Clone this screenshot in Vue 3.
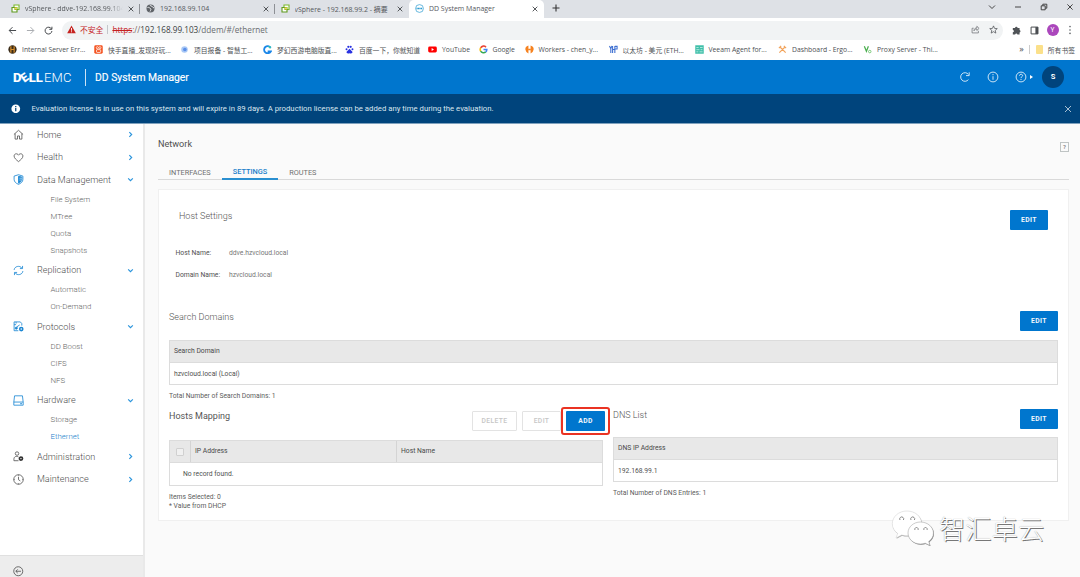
<template>
  <div class="screen">
    <!-- 浏览器标签栏 -->
    <div class="tab-strip">
      <div v-for="tab in tabs" :key="tab.title" class="tab" :class="{ active: tab.active, divided: tab.divided }">
        <svg v-if="tab.icon === 'vsphere'" class="tab-icon" viewBox="0 0 18 18">
          <path d="M6 2h10v9h-4V7H6z" fill="#fff" stroke="#7ab829" stroke-width="2.2" />
          <path d="M2 7h6v4h4v5H2z" fill="#fff" stroke="#5d9a1c" stroke-width="2.2" />
          <path d="M7 7h5v4H7z" fill="#f2d64b" />
        </svg>
        <svg v-else-if="tab.icon === 'globe'" class="tab-icon" viewBox="0 0 18 18">
          <circle cx="9" cy="9" r="8" fill="#5f6368" />
          <path d="M3 7c3-1 4 1 6 2s0 4-1 6M8 2c1 3 4 1 5 4l3 2" fill="none" stroke="#e8eaed" stroke-width="2" />
        </svg>
        <svg v-else class="tab-icon" viewBox="0 0 18 18">
          <circle cx="9" cy="9" r="7.8" fill="#fff" stroke="#2a9bd0" stroke-width="1.4" />
          <path d="M3 9h12" stroke="#2a9bd0" stroke-width="3.4" stroke-dasharray="2.4 .6" />
        </svg>
        <span class="tab-title">{{ tab.title }}</span>
        <svg class="tab-close" viewBox="0 0 6 6"><path d="M.7.7l4.6 4.6M5.3.7L.7 5.3" /></svg>
      </div>
      <svg class="new-tab" viewBox="0 0 8 8"><path d="M4 .5v7M.5 4h7" /></svg>
      <div class="window-controls">
        <svg viewBox="0 0 8 8"><path d="M1 2.5l3 3 3-3" /></svg>
        <svg viewBox="0 0 8 8"><path d="M1 4h6" /></svg>
        <svg viewBox="0 0 8 8"><path d="M1.2 2.8h4v4h-4zM2.8 2.6V1.2h4v4H5.4" /></svg>
        <svg viewBox="0 0 8 8"><path d="M1.4 1.4l5.2 5.2M6.6 1.4L1.4 6.6" /></svg>
      </div>
    </div>

    <!-- 地址栏 -->
    <div class="toolbar">
      <svg class="nav-icon" viewBox="0 0 10 10"><path d="M9 5H1.4M5 1.3L1.3 5 5 8.7" /></svg>
      <svg class="nav-icon dim" viewBox="0 0 10 10"><path d="M1 5h7.6M5 1.3L8.7 5 5 8.7" /></svg>
      <svg class="nav-icon" viewBox="0 0 10 10"><path d="M8.3 3.2A3.8 3.8 0 1 0 8.8 5.6M8.8.8v2.9H5.9" /></svg>
      <div class="address">
        <svg class="warn" viewBox="0 0 9 9"><path d="M4.5.6L8.8 8.2H.2z" fill="#c5221f" /><path d="M4.5 3v2.7M4.5 6.3v1" stroke="#fff" stroke-width=".9" /></svg>
        <span class="unsafe">不安全</span>
        <span class="bar"></span>
        <span class="url"><s>https</s><i>://</i><b>192.168.99.103</b>/ddem/#/ethernet</span>
        <svg class="addr-icon" viewBox="0 0 10 10"><path d="M3 3.6H1.2v5.2h7V6.5M3.3 6.4C3.4 4.3 4.7 3.2 6.5 3.2V1.4L9 3.8 6.5 6.1V4.4C5 4.3 4 5 3.3 6.4z" /></svg>
        <svg class="addr-icon star" viewBox="0 0 10 10"><path d="M5 1l1.2 2.8 3 .2L6.9 6l.7 3L5 7.4 2.4 9l.7-3L.8 4l3-.2z" /></svg>
      </div>
      <svg class="ext" viewBox="0 0 10 10"><path d="M3.4 2.2a1.4 1.4 0 0 1 2.8 0h2.2v2.2a1.4 1.4 0 0 1 0 2.7v2.3H6a1.3 1.3 0 0 0-2.5 0H.9V6.9a1.2 1.2 0 0 0 0-2.4V2.2z" fill="#4f5357" /></svg>
      <svg class="ext" viewBox="0 0 10 10"><path d="M1.2 1.200h7.600v7.600H1.200z" fill="none" stroke="#4a4d51" stroke-width="1.1" /><path d="M6 1.200h3v7.600H6z" fill="#4a4d51" /></svg>
      <span class="profile">Y</span>
      <svg class="dots" viewBox="0 0 4 10"><circle cx="2" cy="1.6" r=".8" /><circle cx="2" cy="5" r=".8" /><circle cx="2" cy="8.4" r=".8" /></svg>
    </div>

    <!-- 书签栏 -->
    <div class="bookmarks">
      <div v-for="b in bookmarks" :key="b.text" class="bookmark" :style="{ width: b.width + 'px' }">
        <svg viewBox="0 0 10 10">
          <template v-if="b.icon === 'globe'">
            <circle cx="5" cy="5" r="4.6" fill="#3a2b18" />
            <path d="M3.2 1.5v7M6.8 1.5v7M3.2 5h3.6" stroke="#d9902c" stroke-width="1.3" />
          </template>
          <template v-else-if="b.icon === 'kuai'">
            <rect x=".3" y=".3" width="9.4" height="9.4" rx="1.6" fill="#f4511e" />
            <circle cx="3.7" cy="3" r="1.2" fill="none" stroke="#fff" stroke-width=".8" />
            <circle cx="6.6" cy="3" r="1.2" fill="none" stroke="#fff" stroke-width=".8" />
            <rect x="2.8" y="5.2" width="4.6" height="3" rx=".7" fill="none" stroke="#fff" stroke-width=".9" />
          </template>
          <template v-else-if="b.icon === 'dot'">
            <circle cx="5" cy="5" r="3.6" fill="#a9c8f5" />
            <circle cx="5.4" cy="5" r="2" fill="#5b8fe8" />
          </template>
          <template v-else-if="b.icon === 'swirl'">
            <path d="M8.6 3A4 4 0 1 0 8.8 7H5.2" fill="none" stroke="#1a86e8" stroke-width="2" />
            <path d="M5 1.2L9 1.8 8 4.4z" fill="#31c6b4" />
          </template>
          <template v-else-if="b.icon === 'paw'">
            <circle cx="1.7" cy="4.6" r="1.1" /><circle cx="3.7" cy="2" r="1.2" />
            <circle cx="6.3" cy="2" r="1.2" /><circle cx="8.3" cy="4.6" r="1.1" />
            <path d="M5 4.2L8.2 7.6c.5 2-1.6 2-3.2 1.6-1.6.4-3.7.4-3.2-1.6z" />
          </template>
          <template v-else-if="b.icon === 'youtube'">
            <rect x=".2" y="1.6" width="9.6" height="6.8" rx="1.6" fill="#f00" />
            <path d="M4 3.4L6.7 5 4 6.6z" fill="#fff" />
          </template>
          <template v-else-if="b.icon === 'google'">
            <g fill="none" stroke-width="1.7">
              <path d="M7.8 2.4A3.7 3.7 0 0 0 1.8 3.2" stroke="#ea4335" />
              <path d="M1.8 3.2a3.7 3.7 0 0 0 0 3.6" stroke="#fbbc05" />
              <path d="M1.8 6.8a3.7 3.7 0 0 0 5.7.9" stroke="#34a853" />
              <path d="M7.5 7.7A3.7 3.7 0 0 0 8.7 5H5" stroke="#4285f4" />
            </g>
          </template>
          <template v-else-if="b.icon === 'workers'">
            <path d="M3.8.6Q0 2 .4 5t3.4 4.4z" fill="#f6821f" />
            <path d="M6.2.6Q10 2 9.6 5t-3.4 4.4z" fill="#f6821f" />
            <path d="M3.5 4.2h3v1.6h-3z" fill="#f6821f" />
          </template>
          <template v-else-if="b.icon === 'yep'">
            <path d="M.5 1l1.5 3 1.3-3M2 4v5M4 1v8M4 5h2M6.5 1v8M6.5 1.5h2.5v3H6.5" fill="none" stroke="#3d6fd1" stroke-width="1.2" />
          </template>
          <template v-else-if="b.icon === 'veeam'">
            <rect x=".3" y=".3" width="9.4" height="9.4" fill="#3fbfa9" />
            <path d="M1.5 2.8h2.5M5.5 2.8h3M1.5 5.2h3.5M6.2 5.2h2M1.5 7.6h2.2M5 7.6h3.5" stroke="#b9ebe2" stroke-width="1" />
          </template>
          <template v-else-if="b.icon === 'tools'">
            <path d="M1.5 8.5L7.8 2.2M8.5 8.5L2.2 2.2M1 3.5L3.5 1M6.5 1L9 3.5" fill="none" stroke="#f2a45c" stroke-width="1.3" />
          </template>
          <template v-else>
            <path d="M1.5 1.5l2.3 5.5L6 1.5" fill="none" stroke="#4caf50" stroke-width="1.4" />
            <circle cx="7.5" cy="7.3" r="1.4" fill="none" stroke="#6fc46f" stroke-width="1" />
          </template>
        </svg>
        <span>{{ b.text }}</span>
      </div>
      <div class="bookmarks-end">
        <span class="more">»</span>
        <span class="sep"></span>
        <span class="folder"></span>
        <span class="all">所有书签</span>
      </div>
    </div>

    <!-- 应用头部 -->
    <header class="app-header">
      <div class="logo"><b>D<em>E</em>LL</b><span>EMC</span></div>
      <h1>DD System Manager</h1>
      <div class="header-actions">
        <svg class="refresh" viewBox="0 0 12 12"><path d="M9.4 3.4A4.300 4.300 0 1 0 9.400 8.600M10.200 1.300v3.300H7" /></svg>
        <svg class="info" viewBox="0 0 12 12"><circle cx="6" cy="6" r="4.9" /><path d="M6 5.2v3.6M6 3v1.2" /></svg>
        <svg class="help" viewBox="0 0 12 12"><circle cx="6" cy="6" r="4.9" /><path d="M4.5 4.7c0-2 3.1-1.9 3.1-.1C7.6 5.7 6 5.7 6 7.1M6 8v1" /></svg>
        <span class="caret"></span>
        <span class="avatar">S</span>
      </div>
    </header>

    <div class="banner">
      <svg class="banner-icon" viewBox="0 0 10 10"><circle cx="5" cy="5" r="4.6" fill="#fff" /><path d="M5 4.3v3.4M5 2.2v1.3" stroke="#00447c" stroke-width="1.3" /></svg>
      <span>Evaluation license is in use on this system and will expire in 89 days. A production license can be added any time during the evaluation.</span>
      <svg class="banner-close" viewBox="0 0 8 8"><path d="M1 1l6 6M7 1L1 7" /></svg>
    </div>

    <div class="body">
      <!-- 侧边菜单 -->
      <aside class="sidebar">
        <nav>
          <div v-for="item in menu" :key="item.name">
            <div class="menu-item">
              <svg class="menu-icon" :class="{ blue: item.children }" viewBox="0 0 12 12">
                <path v-if="item.name === 'Home'" d="M1 6l5-4.6L11 6M2.3 5v6h2.6V7.6h2.2V11h2.6V5" />
                <path v-else-if="item.name === 'Health'" d="M6 10.5C3.5 8.5 1.2 6.6 1.2 4.4c0-2.7 3.5-3.4 4.8-.9 1.3-2.5 4.8-1.8 4.8.9 0 2.2-2.3 4.1-4.8 6.1z" />
                <template v-else-if="item.name === 'Data Management'">
                  <path d="M6 .8l4.8 1.5v3.5c0 2.6-2 4.4-4.8 5.5-2.8-1.1-4.8-2.900-4.8-5.500V2.300z" />
                  <path d="M6 2.5v7.5c2.2-1 3.6-2.4 3.6-4.5V3.3z" fill="#1b87d3" />
                  <path d="M7 4.6h2.8M7 6.6h2.6" stroke="#fff" stroke-width=".6" />
                </template>
                <path v-else-if="item.name === 'Replication'" d="M1.2 5.4C1.6 1.4 7.3 0 9.7 3.4M10.4 1v2.9H7.5M10.8 6.6c-.4 4-6.1 5.4-8.5 2M1.6 11V8.1h2.9" />
                <template v-else-if="item.name === 'Protocols'">
                  <path d="M9.6 5V2.8L8 1H1.2v9.6h4.6M1.2 4h2.2M3.4 1v1.8M4.3 8.8V6.3l3-2" />
                  <circle cx="3.5" cy="7.8" r="1.1" fill="#1b87d3" />
                  <circle cx="9" cy="8.8" r="1.7" stroke-width="1.7" />
                </template>
                <template v-else-if="item.name === 'Hardware'">
                  <path d="M.9 7.7L1.7.9h8.6l.8 6.8v3.4H.9zM.9 7.7h10.2" />
                  <path d="M7.8 9.5h2" stroke-width="1.2" />
                </template>
                <template v-else-if="item.name === 'Administration'">
                  <circle cx="4.4" cy="2.8" r="1.9" />
                  <path d="M6 10.6H1V9c0-3.3 3-3.7 5-2.5" />
                  <circle cx="8.7" cy="8.3" r="1.7" stroke="#333" stroke-width="1.8" />
                </template>
                <template v-else>
                  <circle cx="6" cy="6" r="5.2" />
                  <path d="M6 3v3.2l2 1.4M6 .8v1M6 10.2v1M.8 6h1M10.2 6h1" />
                </template>
              </svg>
              <span>{{ item.name }}</span>
              <svg class="chevron" viewBox="0 0 6 6"><path :d="item.children ? 'M1 2l2 2 2-2' : 'M2 1l2 2-2 2'" /></svg>
            </div>
            <div v-for="child in item.children" :key="child" class="menu-child" :class="{ current: child === 'Ethernet' }">{{ child }}</div>
          </div>
        </nav>
        <div class="sidebar-foot">
          <svg viewBox="0 0 10 10"><circle cx="5" cy="5" r="4.3" /><path d="M7.6 5H2.7M4.5 3.2L2.7 5l1.8 1.8" /></svg>
        </div>
      </aside>

      <!-- 网络设置 -->
      <main class="content">
        <div class="page-head">
          <h2>Network</h2>
          <span class="page-help">?</span>
        </div>
        <div class="page-tabs">
          <span>INTERFACES</span>
          <span class="selected">SETTINGS</span>
          <span>ROUTES</span>
        </div>

        <div class="card">
          <div class="host-head">
            <h3>Host Settings</h3>
            <button class="btn">EDIT</button>
          </div>
          <div v-for="row in hostInfo" :key="row.label" class="info-row">
            <span class="label">{{ row.label }}</span>
            <span>{{ row.value }}</span>
          </div>

          <div class="search-head">
            <h3>Search Domains</h3>
            <button class="btn">EDIT</button>
          </div>
          <div class="table">
            <div class="th">Search Domain</div>
            <div class="td">hzvcloud.local (Local)</div>
          </div>
          <div class="total">Total Number of Search Domains: 1</div>

          <div class="lower">
            <section>
              <div class="hosts-head">
                <h3 class="dark">Hosts Mapping</h3>
                <button class="btn ghost">DELETE</button>
                <button class="btn ghost edit">EDIT</button>
                <span class="add-wrap"><button class="btn">ADD</button></span>
              </div>
              <div class="table hosts">
                <div class="th">
                  <span class="check-cell"><i></i></span>
                  <span class="ip-cell">IP Address</span>
                  <span class="name-cell">Host Name</span>
                </div>
                <div class="td empty">No record found.</div>
              </div>
              <div class="notes">
                <div>Items Selected: 0</div>
                <div>* Value from DHCP</div>
              </div>
            </section>
            <section>
              <div class="dns-head">
                <h3>DNS List</h3>
                <button class="btn">EDIT</button>
              </div>
              <div class="table">
                <div class="th">DNS IP Address</div>
                <div class="td">192.168.99.1</div>
              </div>
              <div class="total">Total Number of DNS Entries: 1</div>
            </section>
          </div>
        </div>
      </main>
    </div>

    <!-- 水印 -->
    <div class="watermark">
      <svg viewBox="0 0 44 36">
        <path fill="#aaa" transform="translate(.6 .8)" d="M16 1C7.5 1 1.3 6.8 1.3 13.8c0 4 2 7.4 5.4 9.7L5 28l5.6-3c2 .6 3.5.8 5.4.8 8.5 0 14.7-5 14.7-12S24.5 1 16 1z" />
        <path fill="#fff" stroke="#ccc" stroke-width=".5" d="M16 1C7.5 1 1.3 6.8 1.3 13.8c0 4 2 7.4 5.4 9.7L5 28l5.6-3c2 .6 3.5.8 5.4.8 8.5 0 14.7-5 14.7-12S24.5 1 16 1z" />
        <path fill="#888" transform="translate(.6 .8)" d="M29.5 12C22.4 12 17 17 17 23s5.4 11 12.5 11c1.8 0 3.2-.3 4.7-.8l4.8 2.3-1.3-4C40.6 29.5 42.4 26.6 42.4 23c0-6-5.8-11-12.9-11z" />
        <path fill="#fff" stroke="#999" stroke-width=".5" d="M29.5 12C22.4 12 17 17 17 23s5.4 11 12.5 11c1.8 0 3.2-.3 4.7-.8l4.8 2.3-1.3-4C40.6 29.5 42.4 26.6 42.4 23c0-6-5.8-11-12.9-11z" />
        <path fill="none" stroke="#888" stroke-width="1" d="M9 10a2 2 0 1 1 3.4 0M20 10a2 2 0 1 1 3.4 0M24 20a1.7 1.7 0 1 1 3 0M33 20a1.7 1.7 0 1 1 3 0" />
      </svg>
      <span>智汇卓云</span>
    </div>
  </div>
</template>

<script setup>
import { ref } from 'vue'

// 浏览器标签
const tabs = ref([
  { title: 'vSphere - ddve-192.168.99.104', icon: 'vsphere', divided: true },
  { title: '192.168.99.104', icon: 'globe', divided: true },
  { title: 'vSphere - 192.168.99.2 - 摘要', icon: 'vsphere' },
  { title: 'DD System Manager', icon: 'dell', active: true }
])

// 书签，width 为每一项占用的宽度
const bookmarks = ref([
  { text: 'Internal Server Err...', icon: 'globe', width: 86 },
  { text: '快手直播_发现好玩...', icon: 'kuai', width: 86 },
  { text: '项目报备 - 智慧工...', icon: 'dot', width: 83 },
  { text: '梦幻西游电脑版直...', icon: 'swirl', width: 82 },
  { text: '百度一下，你就知道', icon: 'paw', width: 83 },
  { text: 'YouTube', icon: 'youtube', width: 50.5 },
  { text: 'Google', icon: 'google', width: 46 },
  { text: 'Workers - chen_y...', icon: 'workers', width: 84 },
  { text: '以太坊 - 美元 (ETH...', icon: 'yep', width: 86 },
  { text: 'Veeam Agent for...', icon: 'veeam', width: 83.5 },
  { text: 'Dashboard - Ergo...', icon: 'tools', width: 85 },
  { text: 'Proxy Server - Thi...', icon: 'proxy', width: 90 }
])

// 侧边菜单，有 children 的为展开状态
const menu = ref([
  { name: 'Home' },
  { name: 'Health' },
  { name: 'Data Management', children: ['File System', 'MTree', 'Quota', 'Snapshots'] },
  { name: 'Replication', children: ['Automatic', 'On-Demand'] },
  { name: 'Protocols', children: ['DD Boost', 'CIFS', 'NFS'] },
  { name: 'Hardware', children: ['Storage', 'Ethernet'] },
  { name: 'Administration' },
  { name: 'Maintenance' }
])

const hostInfo = ref([
  { label: 'Host Name:', value: 'ddve.hzvcloud.local' },
  { label: 'Domain Name:', value: 'hzvcloud.local' }
])
</script>

<style>
body {
  margin: 0;
  overflow: hidden;
}
</style>

<style scoped>
.screen {
  position: relative;
  width: 1080px;
  height: 577px;
  overflow: hidden;
  display: flex;
  flex-direction: column;
  background: #fafafa;
  font-family: Roboto, "Noto Sans CJK SC", sans-serif;
  font-size: 6.75px;
  color: #5c5c5c;
}

.screen * {
  box-sizing: border-box;
}

h1, h2, h3 {
  margin: 0;
  font-weight: 400;
}

svg {
  display: block;
  flex: none;
}

/* 标签栏 */
.tab-strip {
  display: flex;
  height: 18px;
  background: #dee1e6;
  font-family: "Open Sans", "Noto Sans CJK SC", sans-serif;
  font-size: 6.95px;
  color: #55585c;
}

.tab {
  display: flex;
  align-items: center;
  width: 134.5px;
  height: 18px;
  padding: 0 6px 1px 6px;
}

.tab:first-child {
  width: 140px;
  padding-left: 11px;
}

.tab.divided {
  background: linear-gradient(#8d9095, #8d9095) right 4px / 1px 10px no-repeat;
}

.tab.active {
  background: #fff;
  border-radius: 5px 5px 0 0;
}

.tab-icon {
  width: 9px;
  height: 9px;
  margin-right: 5px;
}

.tab-title {
  flex: 1;
  overflow: hidden;
  white-space: nowrap;
}

.tab:first-child .tab-title {
  mask-image: linear-gradient(90deg, #000 85%, transparent);
}

.tab-close {
  width: 6px;
  height: 6px;
  margin-left: 5px;
  stroke: #44474b;
  stroke-width: 0.9;
}

.new-tab {
  width: 8px;
  height: 8px;
  margin: 4px 0 0 8px;
  stroke: #333;
  stroke-width: 1.1;
}

.window-controls {
  display: flex;
  gap: 18px;
  margin: 3px 6px 0 auto;
}

.window-controls svg {
  width: 8px;
  height: 8px;
  fill: none;
  stroke: #333;
  stroke-width: 0.9;
}

/* 地址栏 */
.toolbar {
  display: flex;
  align-items: center;
  height: 22px;
  padding: 2px 6px 0 8px;
  background: #fff;
}

.nav-icon {
  width: 9px;
  height: 9px;
  margin-right: 9px;
  fill: none;
  stroke: #45484c;
  stroke-width: 1.1;
}

.nav-icon.dim {
  stroke: #a9acb0;
}

.address {
  display: flex;
  align-items: center;
  width: 941px;
  height: 19px;
  padding: 0 5px 1px 5px;
  background: #f1f3f4;
  border-radius: 10px;
  font-family: "Open Sans", "Noto Sans CJK SC", sans-serif;
  font-size: 8.2px;
  color: #6a6d71;
}

.warn {
  width: 9px;
  height: 9px;
}

.unsafe {
  margin-left: 4px;
  font-size: 7.8px;
  color: #c5221f;
}

.bar {
  width: 1px;
  height: 9px;
  margin: 0 4px;
  background: #c3c6ca;
}

.url {
  flex: 1;
}

.url s,
.url i {
  font-style: normal;
  color: #c5221f;
}

.url i {
  color: #7d6b6b;
}

.url b {
  font-weight: 400;
  color: #3b3e42;
}

.addr-icon {
  width: 9px;
  height: 9px;
  margin-right: 9px;
  fill: none;
  stroke: #6a6d71;
  stroke-width: 0.8;
}

.addr-icon.star {
  margin-right: 0;
  stroke: #4a4d51;
}

.ext {
  width: 9px;
  height: 9px;
  margin-left: 9px;
}

.profile {
  width: 12px;
  height: 12px;
  margin-left: 7.5px;
  border-radius: 50%;
  background: #ab47bc;
  color: #fff;
  font-size: 6.5px;
  line-height: 12px;
  text-align: center;
}

.dots {
  width: 4px;
  height: 10px;
  margin-left: auto;
  margin-right: 2px;
  fill: #5f6368;
}

/* 书签栏 */
.bookmarks {
  display: flex;
  align-items: center;
  height: 20px;
  padding: 0 0 1px 8px;
  background: #fff;
  font-family: "Open Sans", "Noto Sans CJK SC", sans-serif;
  font-size: 6.8px;
  color: #4d5054;
}

.bookmark {
  display: flex;
  align-items: center;
  flex: none;
  white-space: nowrap;
}

.bookmark svg {
  width: 9px;
  height: 9px;
  margin-right: 5px;
  fill: #2932e1;
}

.bookmarks-end {
  display: flex;
  align-items: center;
  flex: none;
  margin-left: auto;
  padding-right: 5px;
  white-space: nowrap;
}

.more {
  margin-top: -2px;
  font-size: 9px;
}

.sep {
  width: 1px;
  height: 9px;
  margin: 0 6px 0 5px;
  background: #ccc;
}

.folder {
  width: 7px;
  height: 9px;
  margin-right: 5px;
  background: #fbe08a;
  border-radius: 1px;
}

/* 应用头部 */
.app-header {
  display: flex;
  align-items: center;
  height: 34px;
  padding: 0 16px 0 13px;
  background: #0076ce;
  color: #fff;
}

.logo {
  display: flex;
  width: 73px;
  height: 17px;
  border-right: 1px solid rgba(255, 255, 255, 0.8);
  font-size: 13px;
  line-height: 17px;
}

.logo b {
  width: 31px;
  font-weight: 700;
  -webkit-text-stroke: 0.2px #fff;
}

.logo em {
  display: inline-block;
  font-style: normal;
  transform: rotate(-36deg) scale(0.9);
}

.logo span {
  font-weight: 300;
  letter-spacing: 0.2px;
}

h1 {
  margin-left: 9px;
  font-size: 10.35px;
  font-weight: 400;
  -webkit-text-stroke: 0.15px #fff;
}

.header-actions {
  display: flex;
  align-items: center;
  margin-left: auto;
}

.header-actions svg {
  width: 12px;
  height: 12px;
  fill: none;
  stroke: #fff;
  stroke-width: 0.8;
}

.info {
  margin-left: 16.5px;
}

.help {
  margin-left: 16px;
}

.caret {
  margin-left: 3px;
  border: 2px solid transparent;
  border-left: 3.5px solid #fff;
  border-right: 0;
}

.avatar {
  width: 22px;
  height: 22px;
  margin-left: 9px;
  border-radius: 50%;
  background: #00447c;
  font-size: 7.5px;
  font-weight: 700;
  line-height: 22px;
  text-align: center;
}

.banner {
  display: flex;
  align-items: center;
  height: 30px;
  padding: 0 8px 0 11px;
  background: #00447c;
  border-bottom: 1px solid #7fa1bd;
  color: #dbe6ef;
  font-size: 7.76px;
}

.banner-icon {
  width: 9.5px;
  height: 9.5px;
  margin-right: 11px;
}

.banner-close {
  width: 8px;
  height: 8px;
  margin-left: auto;
  stroke: #b9cddd;
  stroke-width: 0.9;
}

/* 侧边菜单 */
.body {
  display: flex;
  flex: 1;
  min-height: 0;
}

.sidebar {
  display: flex;
  flex-direction: column;
  flex: none;
  width: 145px;
  background: #fff;
  border-right: 2px solid #e9e9e9;
}

nav {
  flex: 1;
  margin-top: -0.6px;
}

.menu-item {
  display: flex;
  align-items: center;
  height: 22.5px;
  padding: 0 9px 0 13px;
  font-size: 9.1px;
  color: #4f4f4f;
  font-weight: 300;
}

.menu-icon {
  width: 11px;
  height: 11px;
  margin-right: 13px;
  fill: none;
  stroke: #555;
  stroke-width: 0.9;
}

.menu-icon.blue {
  stroke: #1b87d3;
}

.chevron {
  width: 7px;
  height: 7px;
  margin-left: auto;
  fill: none;
  stroke: #2a94dc;
  stroke-width: 1;
}

.menu-child {
  height: 17px;
  padding-left: 50.5px;
  font-size: 7.85px;
  font-weight: 300;
  line-height: 17.6px;
  color: #666;
}

.menu-child.current {
  color: #1b7fcb;
}

.sidebar-foot {
  height: 22px;
  padding: 10px 0 0 13px;
  background: #ededed;
  border-top: 1px solid #e0e0e0;
}

.sidebar-foot svg {
  width: 10.5px;
  height: 10.5px;
  fill: none;
  stroke: #555;
  stroke-width: 0.8;
}

/* 内容区 */
.content {
  flex: 1;
  padding: 0 11px 0 13px;
}

.page-head {
  display: flex;
  align-items: center;
  justify-content: space-between;
  height: 38px;
}

h2 {
  margin-top: 1px;
  font-size: 9.1px;
  color: #505050;
}

.page-help {
  width: 9px;
  height: 10px;
  margin-top: 8px;
  border: 1px solid #bfc4c4;
  font-size: 6px;
  font-weight: 700;
  line-height: 8px;
  text-align: center;
  color: #888;
}

.page-tabs {
  display: flex;
  height: 18px;
  border-bottom: 1px solid #d9d9d9;
  font-size: 7.35px;
  line-height: 21px;
  color: #707070;
}

.page-tabs span {
  padding: 0 11px;
}

.page-tabs .selected {
  height: 18px;
  line-height: 19px;
  border-bottom: 2px solid #2a8fd0;
  color: #1b7fcb;
  font-weight: 500;
}

.card {
  height: 332px;
  margin-top: 9px;
  padding: 0 10px;
  background: #fff;
  border: 1px solid #f0f0f0;
}

h3 {
  font-size: 9px;
  font-weight: 300;
  line-height: 12px;
  color: #555;
}

h3.dark {
  font-weight: 400;
}

.btn {
  width: 38px;
  height: 20px;
  padding: 0;
  border: 0;
  border-radius: 1px;
  background: #0076ce;
  color: #f2f7fc;
  font-family: inherit;
  font-size: 6.75px;
  font-weight: 700;
  letter-spacing: 0.4px;
}

.btn.ghost {
  width: 45px;
  background: #fff;
  border: 1px solid #e3e3e3;
  color: #c6c6c6;
  font-weight: 500;
}

.host-head {
  display: flex;
  justify-content: space-between;
  height: 52px;
  padding: 20px 10px 0 10px;
}

.info-row {
  display: flex;
  height: 22px;
  padding-left: 6.5px;
  line-height: 23px;
  color: #777;
}

.label {
  width: 53.5px;
  color: #505050;
}

.search-head {
  display: flex;
  justify-content: space-between;
  height: 54px;
  padding-top: 25px;
}

.table {
  border: 1px solid #dcdcdc;
  color: #505050;
}

.th {
  display: flex;
  height: 22px;
  padding-left: 4px;
  background: #e8e8e8;
  border-bottom: 1px solid #dcdcdc;
  line-height: 21px;
  color: #484848;
}

.td {
  height: 21px;
  padding-left: 4px;
  line-height: 22px;
}

.total {
  height: 21px;
  line-height: 22px;
}

.lower {
  display: grid;
  grid-template-columns: 434px 445px;
  gap: 10px;
}

.hosts-head {
  display: flex;
  height: 34px;
  padding-top: 4px;
}

.hosts-head h3 {
  flex: 1;
}

.hosts-head .btn {
  margin-top: 1px;
}

.hosts-head .edit {
  width: 39px;
  margin-left: 5px;
}

/* 红框高亮 */
.add-wrap {
  z-index: 1;
  height: 28px;
  margin: -3px -7px 0 0;
  padding: 2px 3px;
  border: 2px solid #ea3323;
  border-radius: 3px;
  background: #fff;
}

.add-wrap .btn {
  display: block;
  width: 39px;
  margin-top: 0;
}

.hosts .th {
  height: 22px;
  padding: 0;
}

.check-cell {
  display: flex;
  align-items: center;
  width: 21px;
  padding: 1px 0 0 6px;
  border-right: 1px solid #d4d4d4;
}

.check-cell i {
  width: 8px;
  height: 8px;
  background: #f0f0f0;
  border: 1px solid #d0d0d0;
  border-radius: 1px;
}

.ip-cell {
  width: 206px;
  padding-left: 4px;
  border-right: 1px solid #d4d4d4;
}

.name-cell {
  padding-left: 4px;
}

.hosts .empty {
  height: 22px;
  padding-left: 13px;
  line-height: 23px;
}

.notes {
  padding-top: 7px;
  line-height: 9px;
}

.dns-head {
  display: flex;
  justify-content: space-between;
  height: 31px;
  padding-top: 3px;
}

.watermark {
  position: absolute;
  left: 891px;
  top: 510px;
  display: flex;
  align-items: center;
}

.watermark svg {
  width: 44px;
  height: 36px;
}

.watermark span {
  margin-left: 4px;
  font-family: "Noto Sans CJK SC", sans-serif;
  font-size: 26.3px;
  font-weight: 300;
  line-height: 36px;
  color: #fff;
  text-shadow: 1px 1px 0.5px #777, 0 0 1px #999;
}
</style>
